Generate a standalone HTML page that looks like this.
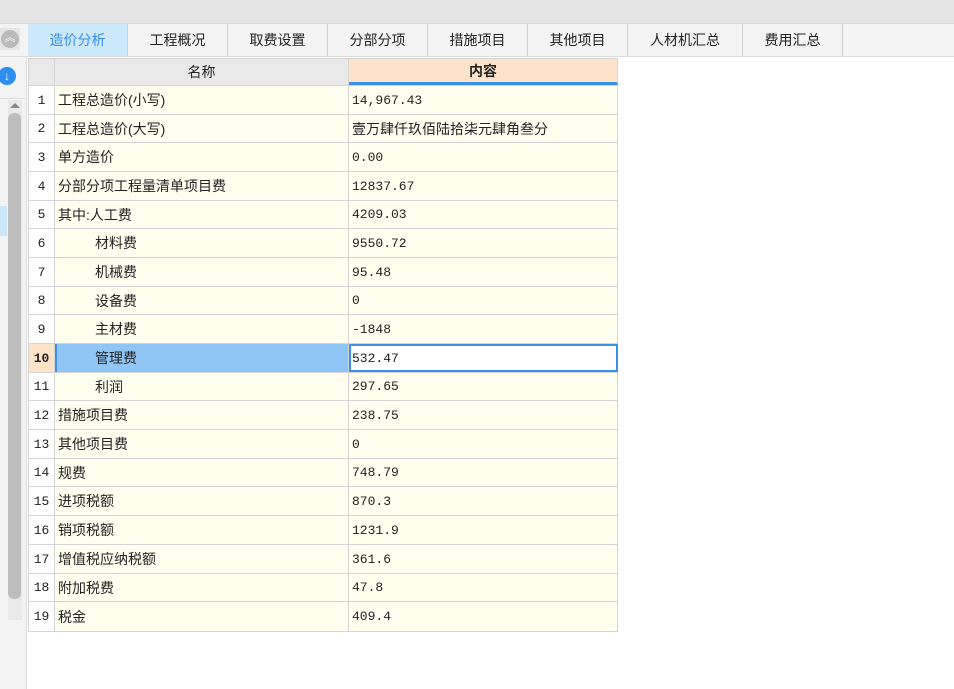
<!DOCTYPE html>
<html><head><meta charset="utf-8"><style>
*{margin:0;padding:0;box-sizing:border-box}
body{width:954px;height:689px;background:#fff;font-family:"Liberation Sans","Noto Sans CJK SC",sans-serif;position:relative;overflow:hidden}
.top{position:absolute;left:0;top:0;width:954px;height:23px;background:#e5e5e5}
.tabbar{position:absolute;left:0;top:23px;width:954px;height:34px;background:#f3f3f3;border-top:1px solid #dcdcdc;border-bottom:1px solid #dcdcdc}
.tab{position:absolute;top:0;height:32px;line-height:32px;text-align:center;font-size:14px;color:#222;border-right:1px solid #cfcfcf}
.tab.act{background:#cde7fb;color:#3a8ee6}
.left{position:absolute;left:0;top:57px;width:27px;height:632px;background:#f3f3f3;border-right:1px solid #ddd}
.sb{position:absolute;left:8px;top:113px;width:13px;height:486px;background:#bdbdbd;border-radius:6px}
.row{position:absolute;left:28px;width:590px;display:flex;border-bottom:1px solid #d4d4d4;font-size:14px;color:#222}
.row div{height:100%;display:flex;align-items:center;border-right:1px solid #d4d4d4}
.i{width:27px;justify-content:center;background:#fff;font-size:13px;font-family:"Liberation Mono",monospace;border-left:1px solid #d4d4d4}
.n{width:294px;background:#fffff0;padding-left:3px}
.c{width:269px;background:#fffff0;padding-left:3px;font-family:"Liberation Mono","Noto Sans CJK SC",monospace;font-size:13px}
.ind{padding-left:40px}
</style></head><body>
<div class="top"></div>
<div class="tabbar">
<div class="tab act" style="left:28px;width:100px">造价分析</div>
<div class="tab" style="left:128px;width:100px">工程概况</div>
<div class="tab" style="left:228px;width:100px">取费设置</div>
<div class="tab" style="left:328px;width:100px">分部分项</div>
<div class="tab" style="left:428px;width:100px">措施项目</div>
<div class="tab" style="left:528px;width:100px">其他项目</div>
<div class="tab" style="left:628px;width:115px">人材机汇总</div>
<div class="tab" style="left:743px;width:100px">费用汇总</div>
</div>
<div style="position:absolute;left:0;top:28px;width:20px;height:22px;background:#e6e6e6"></div>
<div style="position:absolute;left:1px;top:30px;width:18px;height:18px;border-radius:50%;background:#bbb;color:#fff;font-size:11px;text-align:center;line-height:17px">︽</div>
<div class="left"></div>
<div style="position:absolute;left:0;top:98px;width:25px;height:1px;background:#ddd"></div>
<div style="position:absolute;left:0;top:206px;width:7px;height:30px;background:#cde7fb"></div>
<div style="position:absolute;left:-2px;top:67px;width:18px;height:18px;border-radius:50%;background:#2f8ff0;color:#fff;font-size:12px;text-align:center;line-height:18px;font-weight:bold">↓</div>
<div style="position:absolute;left:8px;top:100px;width:14px;height:520px;background:#e9e9e9"></div>
<div class="sb"></div>
<div style="position:absolute;left:10px;top:103px;width:0;height:0;border-left:5px solid transparent;border-right:5px solid transparent;border-bottom:5px solid #888"></div>
<div class="row" style="top:58px;height:28px;border-top:1px solid #d4d4d4">
<div class="i" style="background:#e9e9e9"></div>
<div class="n" style="background:#e9e9e9;justify-content:center;padding:0">名称</div>
<div class="c" style="background:#fde4c8;justify-content:center;padding:0;font-family:'Liberation Sans','Noto Sans CJK SC',sans-serif;font-weight:bold;font-size:14px;border-bottom:3px solid #3b8fe8">内容</div>
</div>
<div class="row" style="top:86px;height:29px"><div class="i">1</div><div class="n">工程总造价(小写)</div><div class="c">14,967.43</div></div>
<div class="row" style="top:115px;height:28px"><div class="i">2</div><div class="n">工程总造价(大写)</div><div class="c" style="font-size:14px">壹万肆仟玖佰陆拾柒元肆角叁分</div></div>
<div class="row" style="top:143px;height:29px"><div class="i">3</div><div class="n">单方造价</div><div class="c">0.00</div></div>
<div class="row" style="top:172px;height:29px"><div class="i">4</div><div class="n">分部分项工程量清单项目费</div><div class="c">12837.67</div></div>
<div class="row" style="top:201px;height:28px"><div class="i">5</div><div class="n">其中:人工费</div><div class="c">4209.03</div></div>
<div class="row" style="top:229px;height:29px"><div class="i">6</div><div class="n ind">材料费</div><div class="c">9550.72</div></div>
<div class="row" style="top:258px;height:29px"><div class="i">7</div><div class="n ind">机械费</div><div class="c">95.48</div></div>
<div class="row" style="top:287px;height:28px"><div class="i">8</div><div class="n ind">设备费</div><div class="c">0</div></div>
<div class="row" style="top:315px;height:29px"><div class="i">9</div><div class="n ind">主材费</div><div class="c">-1848</div></div>
<div class="row" style="top:344px;height:29px"><div class="i" style="background:#fde4c8;font-weight:bold">10</div><div class="n ind" style="background:#90c6f5;border-left:2px solid #3b8fe8;padding-left:38px">管理费</div><div class="c" style="background:#fff;border:2px solid #3b8fe8;padding-left:1px">532.47</div></div>
<div class="row" style="top:373px;height:28px"><div class="i">11</div><div class="n ind">利润</div><div class="c">297.65</div></div>
<div class="row" style="top:401px;height:29px"><div class="i">12</div><div class="n">措施项目费</div><div class="c">238.75</div></div>
<div class="row" style="top:430px;height:29px"><div class="i">13</div><div class="n">其他项目费</div><div class="c">0</div></div>
<div class="row" style="top:459px;height:28px"><div class="i">14</div><div class="n">规费</div><div class="c">748.79</div></div>
<div class="row" style="top:487px;height:29px"><div class="i">15</div><div class="n">进项税额</div><div class="c">870.3</div></div>
<div class="row" style="top:516px;height:29px"><div class="i">16</div><div class="n">销项税额</div><div class="c">1231.9</div></div>
<div class="row" style="top:545px;height:29px"><div class="i">17</div><div class="n">增值税应纳税额</div><div class="c">361.6</div></div>
<div class="row" style="top:574px;height:28px"><div class="i">18</div><div class="n">附加税费</div><div class="c">47.8</div></div>
<div class="row" style="top:602px;height:30px"><div class="i">19</div><div class="n">税金</div><div class="c">409.4</div></div>
</body></html>
